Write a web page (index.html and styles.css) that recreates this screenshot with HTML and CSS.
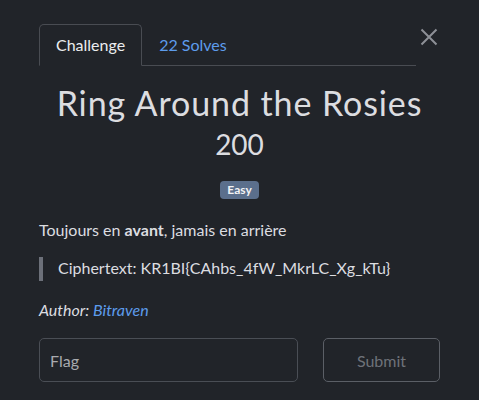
FILE: index.html
```html
<!DOCTYPE html>
<html lang="en">
<head>
<meta charset="utf-8">
<title>Ring Around the Rosies</title>
<link rel="stylesheet" href="styles.css">
</head>
<body>
<div class="modal">
  <div class="header">
    <nav class="tabs">
      <a class="tab active">Challenge</a>
      <a class="tab link">22 Solves</a>
    </nav>
    <button class="close" aria-label="Close">
      <svg width="18" height="18" viewBox="0 0 18 18"><path d="M1.5 1.5L16.5 16.5M16.5 1.5L1.5 16.5" stroke="#8d9096" stroke-width="2" fill="none"/></svg>
    </button>
  </div>
  <h1 class="title">Ring Around the Rosies</h1>
  <div class="points">200</div>
  <div class="badges"><span class="badge">Easy</span></div>
  <p class="desc">Toujours en <strong>avant</strong>, jamais en arrière</p>
  <blockquote class="quote">Ciphertext: KR1BI{CAhbs_4fW_MkrLC_Xg_kTu}</blockquote>
  <p class="author"><em>Author: <a class="link">Bitraven</a></em></p>
  <form class="submit-row">
    <input class="flag" type="text" placeholder="Flag">
    <button class="submit" type="button">Submit</button>
  </form>
</div>
</body>
</html>
```
FILE: styles.css
```css
html, body {
  margin: 0;
  background: #212429;
}
body {
  font-family: Lato, "Noto Sans", sans-serif;
  color: #dcdde0;
}
.modal {
  padding: 24px 39px 0 39px;
}
.header {
  display: flex;
  align-items: flex-start;
}
.tabs {
  display: flex;
  flex: 1;
  border-bottom: 1px solid #494c52;
  margin-right: 2px;
}
.tab {
  font-size: 16px;
  line-height: 20px;
  padding: 10px 16px 10px 16px;
  border: 1px solid transparent;
  border-top-left-radius: 5px;
  border-top-right-radius: 5px;
  margin-bottom: -1px;
}
.tab.active {
  color: #ecedef;
  border-color: #494c52 #494c52 #212429 #494c52;
}
.link {
  color: #5d9cec;
}
.close {
  background: none;
  border: 0;
  padding: 0;
  margin: 2px 0 0 0;
  width: 22px;
  height: 22px;
  display: flex;
  align-items: center;
  justify-content: center;
}
.title {
  font-size: 34px;
  font-weight: 400;
  text-align: center;
  margin: 17px 0 0 0;
  line-height: 40px;
  letter-spacing: 0.9px;
  color: #dcdde0;
}
.points {
  text-align: center;
  font-size: 28px;
  line-height: 34px;
  margin-top: 4px;
}
.badges {
  text-align: center;
  margin-top: 17px;
}
.badge {
  display: inline-block;
  background: #5b6f8c;
  color: #f2f3f5;
  font-size: 12px;
  font-weight: 700;
  line-height: 14px;
  padding: 2px 7px;
  border-radius: 4px;
}
.desc {
  font-size: 16px;
  line-height: 20px;
  margin: 21px 0 0 0;
}
.desc strong {
  font-weight: 700;
}
.quote {
  margin: 17px 0 0 0;
  border-left: 4px solid #6c7079;
  padding: 1px 0 3px 15px;
  font-size: 16px;
  line-height: 20px;
}
.author {
  margin: 19px 0 0 0;
  font-size: 16px;
  line-height: 20px;
}
.submit-row {
  display: flex;
  gap: 25px;
  margin-top: 18px;
}
.flag {
  flex: 1;
  height: 44px;
  box-sizing: border-box;
  background: #212429;
  border: 1px solid #4a4e55;
  border-radius: 5px;
  padding: 0 10px;
  font-family: Lato, sans-serif;
  font-size: 16px;
  color: #dcdde0;
}
.flag::placeholder {
  color: #a9abaf;
}
.submit {
  width: 117px;
  height: 44px;
  background: #212429;
  border: 1px solid #5b5f66;
  border-radius: 5px;
  font-family: Lato, sans-serif;
  font-size: 16px;
  color: #6e7279;
}
```
